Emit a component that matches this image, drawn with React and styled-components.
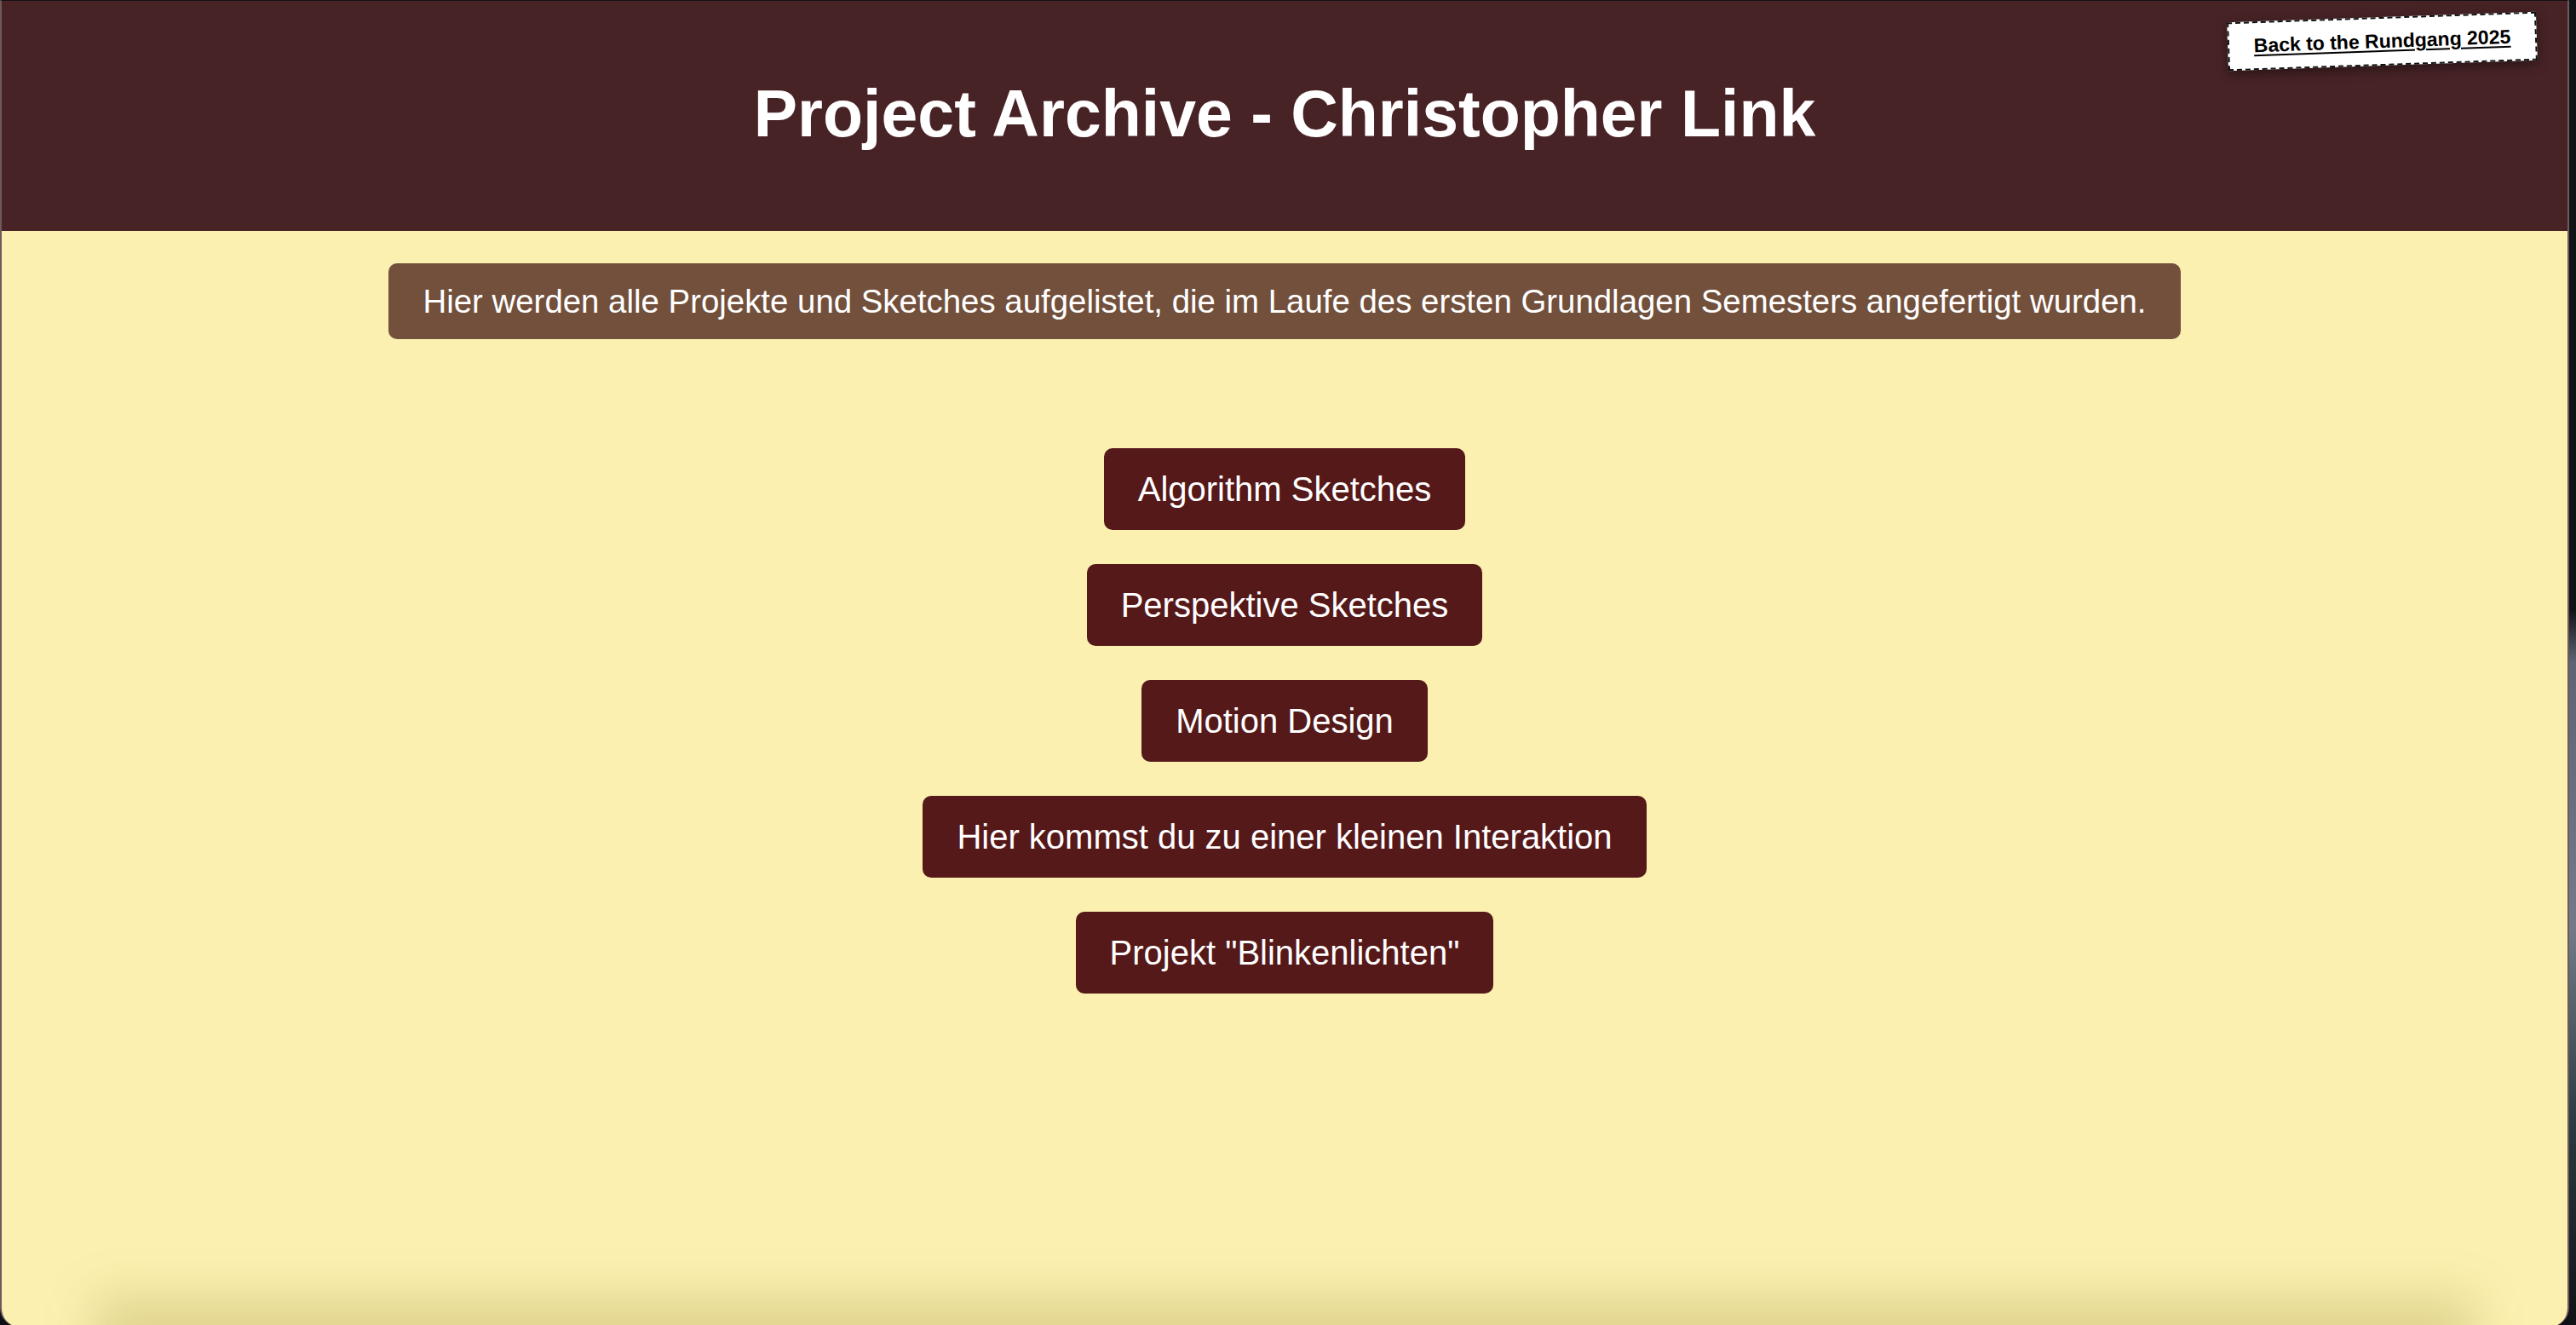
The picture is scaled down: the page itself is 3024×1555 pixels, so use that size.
import React from "react";
import styled, { createGlobalStyle } from "styled-components";

const GlobalStyle = createGlobalStyle`
  html, body {
    margin: 0;
    padding: 0;
    background: #0f1013;
  }
  body {
    font-family: "Liberation Sans", Arial, sans-serif;
  }
`;

const Screen = styled.div`
  width: 3024px;
  height: 1555px;
  display: flex;
  overflow: hidden;
  background: #0f1013;
`;

const Window = styled.div`
  position: relative;
  flex: 0 0 3016px;
  height: 1557px;
  display: flex;
  flex-direction: column;
  align-items: center;
  background: #fbf0b0;
  border-top: 1px solid #121212;
  border-left: 2px solid #6e5a5b;
  border-right: 2px solid #6e5a5b;
  box-sizing: border-box;
  border-bottom-left-radius: 22px;
  border-bottom-right-radius: 22px;
  overflow: hidden;

  &::after {
    content: "";
    position: absolute;
    left: 110px;
    right: 110px;
    bottom: -50px;
    height: 84px;
    background: rgba(120, 95, 10, 0.2);
    filter: blur(28px);
    pointer-events: none;
  }
`;

const DesktopEdge = styled.div`
  flex: 1;
  background: linear-gradient(
    to bottom,
    #121316 0%,
    #121316 46%,
    #5d6574 50%,
    #737b89 70%,
    #2a3a40 85%,
    #121316 100%
  );
`;

const Header = styled.header`
  align-self: stretch;
  height: 270px;
  flex: 0 0 270px;
  background: #482326;
  display: flex;
  align-items: center;
  justify-content: center;
`;

const Title = styled.h1`
  margin: 0 0 5px 0;
  color: #ffffff;
  font-size: 77px;
  font-weight: 700;
  line-height: 1.15;
`;

const BackLink = styled.a`
  position: absolute;
  top: 19px;
  right: 36px;
  width: 363px;
  height: 57px;
  box-sizing: border-box;
  display: flex;
  align-items: center;
  justify-content: center;
  background: #ffffff;
  border: 2px dashed #111111;
  color: #000000;
  font-size: 23px;
  font-weight: 700;
  text-decoration: underline;
  text-underline-offset: 3px;
  transform: rotate(-2deg);
  box-shadow: 0 4px 14px rgba(0, 0, 0, 0.45);
`;

const Intro = styled.p`
  margin: 38px 0 0 0;
  padding: 22px 40px;
  background: #72503c;
  color: #ffffff;
  font-size: 38.4px;
  line-height: 45px;
  border-radius: 10px;
`;

const ButtonList = styled.nav`
  margin-top: 128px;
  display: flex;
  flex-direction: column;
  align-items: center;
  gap: 40px;
`;

const ProjectButton = styled.a`
  display: block;
  padding: 25px 40px;
  background: #55191a;
  color: #ffffff;
  font-size: 40px;
  line-height: 46px;
  border-radius: 10px;
  text-decoration: none;
`;

const projects = [
  "Algorithm Sketches",
  "Perspektive Sketches",
  "Motion Design",
  "Hier kommst du zu einer kleinen Interaktion",
  'Projekt "Blinkenlichten"',
];

export default function App() {
  return (
    <>
      <GlobalStyle />
      <Screen>
        <Window>
          <Header>
            <Title>Project Archive - Christopher Link</Title>
          </Header>
          <BackLink href="#">Back to the Rundgang 2025</BackLink>
          <Intro>
            Hier werden alle Projekte und Sketches aufgelistet, die im Laufe des
            ersten Grundlagen Semesters angefertigt wurden.
          </Intro>
          <ButtonList>
            {projects.map((p) => (
              <ProjectButton key={p} href="#">
                {p}
              </ProjectButton>
            ))}
          </ButtonList>
        </Window>
        <DesktopEdge />
      </Screen>
    </>
  );
}
